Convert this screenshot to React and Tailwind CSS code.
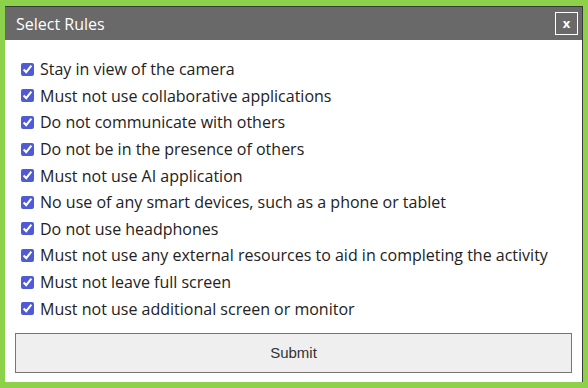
import { useState } from "react";

const rules = [
  "Stay in view of the camera",
  "Must not use collaborative applications",
  "Do not communicate with others",
  "Do not be in the presence of others",
  "Must not use AI application",
  "No use of any smart devices, such as a phone or tablet",
  "Do not use headphones",
  "Must not use any external resources to aid in completing the activity",
  "Must not leave full screen",
  "Must not use additional screen or monitor",
];

export default function App() {
  const [checked, setChecked] = useState(rules.map(() => true));

  function toggle(i) {
    setChecked((c) => c.map((v, j) => (j === i ? !v : v)));
  }

  return (
    <div className="w-[588px] h-[388px] bg-[#8dd14b] pl-[5px] pt-[6px] pr-[5px] pb-[6px]" style={{ fontFamily: '"Open Sans", "Noto Sans", sans-serif' }}>
      <div className="flex flex-col h-full bg-white border-t border-r border-[#3a3a3a]">
        <div className="flex items-center justify-between h-[33px] bg-[#696969] pl-[11px] pr-[4px]">
          <span className="text-white text-[16px]">Select Rules</span>
          <button className="w-[23px] h-[23px] border border-white text-white text-[13px] font-bold leading-none flex items-center justify-center">
            x
          </button>
        </div>
        <div className="flex flex-col pt-[16px] px-[16px]">
          {rules.map((r, i) => (
            <label key={r} className="flex items-center h-[26.6px] gap-[6px] text-[16px] text-[#222]">
              <input
                type="checkbox"
                checked={checked[i]}
                onChange={() => toggle(i)}
                className="w-[13px] h-[13px] m-0 accent-[#4f5bd5]"
              />
              <span>{r}</span>
            </label>
          ))}
        </div>
        <div className="px-[10px] mt-[11px]">
          <button
            className="w-full h-[40px] bg-[#efefef] border border-[#767676] text-[15px] text-[#333]"
            style={{ fontFamily: '"Liberation Sans", Arial, sans-serif' }}
          >
            Submit
          </button>
        </div>
      </div>
    </div>
  );
}
